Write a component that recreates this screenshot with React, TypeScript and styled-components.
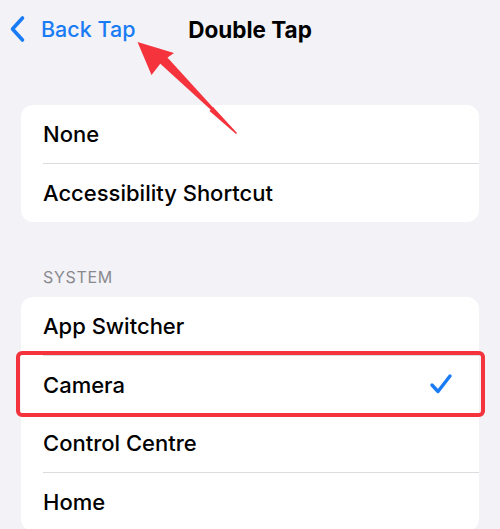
import { FC } from 'react'
import styled, { createGlobalStyle } from 'styled-components'

const GlobalStyle = createGlobalStyle`
  html, body {
    margin: 0;
    padding: 0;
    background: #f2f2f7;
    font-family: Inter, 'Noto Sans', sans-serif;
    -webkit-font-smoothing: antialiased;
  }
`

const rowsTop = ['None', 'Accessibility Shortcut']
const rowsSystem = ['App Switcher', 'Camera', 'Control Centre', 'Home']
const selected = 'Camera'

const App: FC = () => {
  return (
    <Page>
      <GlobalStyle />
      <Nav>
        <Back>
          <svg width='18' height='28' viewBox='0 0 18 28'>
            <path
              d='M13.5 3 L3.5 14 L13.5 25'
              fill='none'
              stroke='#1a7cf4'
              strokeWidth='3.6'
              strokeLinecap='round'
              strokeLinejoin='round'
            />
          </svg>
          <span>Back Tap</span>
        </Back>
        <Title>Double Tap</Title>
      </Nav>

      <Card>
        {rowsTop.map((label, i) => (
          <Row key={label} last={i === rowsTop.length - 1}>
            <Label>{label}</Label>
          </Row>
        ))}
      </Card>

      <SectionHeader>SYSTEM</SectionHeader>
      <Card>
        {rowsSystem.map((label, i) => (
          <Row key={label} last={i === rowsSystem.length - 1} highlighted={label === selected}>
            <Label>{label}</Label>
            {label === selected && (
              <svg width='24' height='22' viewBox='0 0 24 22'>
                <path
                  d='M3 12 L9 18.5 L21 3'
                  fill='none'
                  stroke='#1a7cf4'
                  strokeWidth='3.4'
                  strokeLinecap='round'
                  strokeLinejoin='round'
                />
              </svg>
            )}
          </Row>
        ))}
      </Card>

      <Pointer width='500' height='529' viewBox='0 0 500 529'>
        <path d='M237 133 L213 107 L209.5 111 L236 134 Z' fill='#f5333d' />
        <path d='M159.5 63 L236.5 133.2 L166.5 56.5 Z' fill='#f5333d' />
        <path d='M137.5 42 L151.5 75 L162 61.5 L174 53 Z' fill='#f5333d' />
      </Pointer>
    </Page>
  )
}

export default App

const Page = styled.div`
  position: relative;
  width: 500px;
  height: 529px;
  overflow: hidden;
  background: #f2f2f7;
`

const Nav = styled.div`
  position: relative;
  height: 58px;
  display: flex;
  align-items: center;
  justify-content: center;
`

const Back = styled.div`
  position: absolute;
  left: 9px;
  top: 15px;
  display: flex;
  align-items: center;
  gap: 14px;
  color: #1a7cf4;
  font-size: 21.5px;
  font-weight: 500;
`

const Title = styled.div`
  font-size: 22.5px;
  font-weight: 700;
  color: #000;
`

const Card = styled.div`
  margin: 47px 21px 0 21px;
  background: #fff;
  border-radius: 12px;
`

const Row = styled.div<{ last?: boolean; highlighted?: boolean }>`
  position: relative;
  height: 58.5px;
  margin-left: 22px;
  padding-right: 26px;
  display: flex;
  align-items: center;
  justify-content: space-between;
  box-sizing: border-box;
  border-bottom: ${props => (props.last ? 'none' : '1px solid #dcdce0')};

  &::after {
    content: '';
    display: ${props => (props.highlighted ? 'block' : 'none')};
    position: absolute;
    left: -27px;
    right: -6px;
    top: -5px;
    bottom: -4px;
    border: 4px solid #f5333d;
    border-radius: 6px;
    pointer-events: none;
  }
`

const Label = styled.span`
  font-size: 22px;
  font-weight: 500;
  color: #000;
  margin-top: 1px;
`

const SectionHeader = styled.div`
  padding: 46px 0 0 43px;
  font-size: 16px;
  letter-spacing: 0.7px;
  color: #8a8a8e;
  line-height: 18px;
  & + ${Card} {
    margin-top: 11px;
  }
`

const Pointer = styled.svg`
  position: absolute;
  left: 0;
  top: 0;
  pointer-events: none;
`
